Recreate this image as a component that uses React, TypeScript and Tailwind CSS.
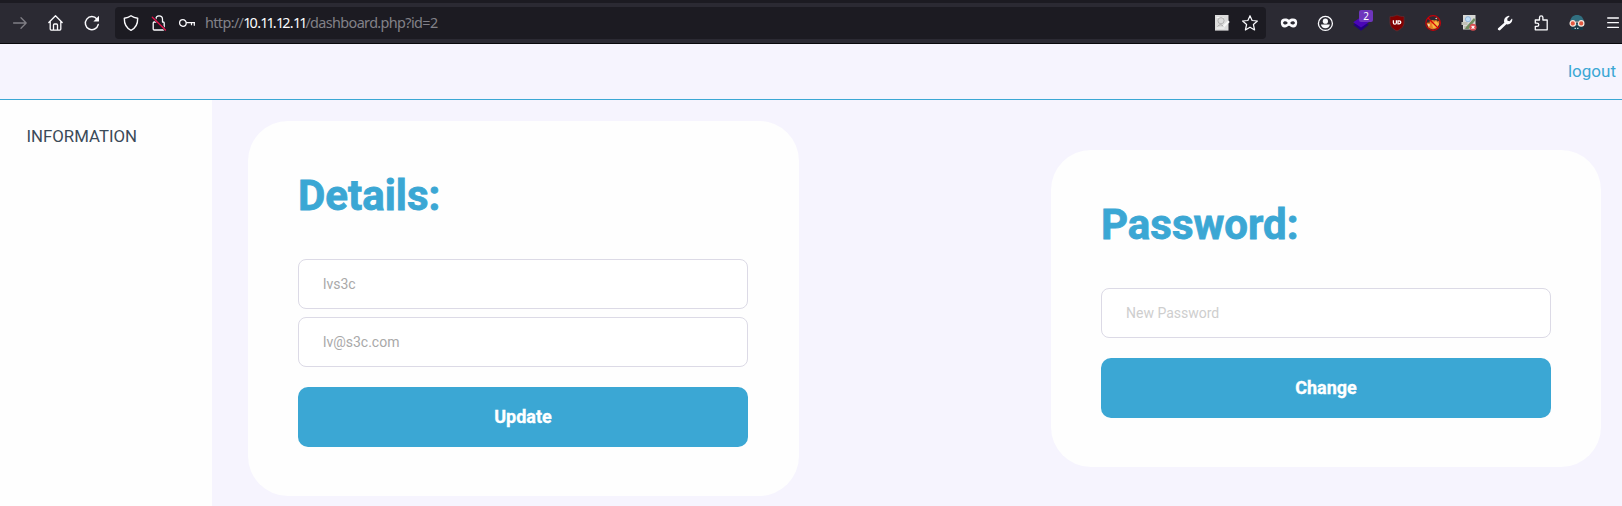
import type { ReactNode } from "react";

function Icon({ children, className = "" }: { children: ReactNode; className?: string }) {
  return (
    <svg viewBox="0 0 16 16" fill="none" className={`size-4 shrink-0 overflow-visible ${className}`}>
      {children}
    </svg>
  );
}

const line = {
  stroke: "#fbfbfe",
  strokeWidth: 1.3,
  strokeLinecap: "round" as const,
  strokeLinejoin: "round" as const,
};

function NavIcons() {
  return (
    <div className="flex gap-5">
      <Icon>
        <path {...line} stroke="#807f86" d="M1.6 8H14.2M9 2.8 14.2 8 9 13.2" />
      </Icon>
      <Icon>
        <path {...line} d="M.8 7.5 7.5.8 14.2 7.5M2.2 6.5v7.6q0 1 1 1h8.6q1 0 1-1V6.5M5.5 15v-5q0-1 1-1h2q1 0 1 1v5" />
      </Icon>
      <Icon>
        <path {...line} strokeWidth={1.5} d="M12.9 4A6.5 6.5 0 1 0 14.2 9.6" />
        <path fill="#fbfbfe" d="M15 .8v5.1a.6.6 0 0 1-.6.6H9.4z" />
      </Icon>
    </div>
  );
}

function Host({ name }: { name: string }) {
  return (
    <span className="text-[#fbfbfe]">
      {name.split("").map((c, i) => (
        <span key={i} className={c === "1" ? "tracking-[-2px]" : "tracking-[-0.7px]"}>
          {c}
        </span>
      ))}
    </span>
  );
}

function AddressBar() {
  return (
    <div className="ml-[15px] flex h-8 w-[1151px] items-center rounded bg-[#1c1b22] px-2">
      <div className="flex gap-3">
        <Icon>
          <path {...line} strokeWidth={1.4} d="M8 .8C5.8 2.4 3.8 3 1.3 3.3 1.2 9 3 13 8 15.3c5-2.3 6.8-6.3 6.7-12C12.2 3 10.2 2.4 8 .8z" />
        </Icon>
        <Icon>
          <path {...line} d="M5 4C5 2 6.300.8 8 .8s3.500 1.200 3.500 3.400V7h.7q1 0 1 1v6q0 1-1 1H3.200q-1 0-1-1V8q0-1 1-1h3" />
          <path stroke="#1c1b22" strokeWidth="2.400" d="M1.500 2.200 14.500 14.800" />
          <path stroke="#e8124c" strokeWidth="1.300" strokeLinecap="round" d="M1.300 2.200 14.500 15" />
        </Icon>
        <Icon>
          <circle {...line} strokeWidth={1.3} cx="3.900" cy="8" r="3.300" />
          <path {...line} strokeWidth={1.2} strokeLinecap="butt" d="M7.200 7.600H16M12.500 7.600v2.600M15.300 7.600v3.200" />
        </Icon>
      </div>
      <span className="ml-[10px] font-['Noto_Sans'] text-[14.4px] leading-5 tracking-[-0.62px] text-[#828188]">
        http://
        <Host name="10.11.12.11" />
        /dashboard.php?id=2
      </span>
      <div className="ml-auto flex gap-3">
        <Icon>
          <rect x="1" y="0" width="13.500" height="15.600" fill="#dcdcdc" />
          <path stroke="#f7f7f7" d="M2.500 2.500h7M2.500 13h8" />
          <circle cx="7" cy="5.700" r="3.100" stroke="#b4b4b4" strokeWidth="1" />
          <path stroke="#aaa" d="M3.500 11.500q3-3.500 6 0" />
          <path stroke="#f7f7f7" strokeWidth="2.200" d="M15 6.200 9.500 11.500" />
        </Icon>
        <Icon>
          <path {...line} strokeWidth={1.2} d="m8 .7 2.100 4.800 5.300.5-4 3.500 1.200 5.500L8 12.200 3.400 15l1.200-5.500L.6 6l5.300-.5z" />
        </Icon>
      </div>
    </div>
  );
}

function Extensions() {
  return (
    <div className="ml-[15px] flex gap-5">
      <Icon>
        <path fill="#fbfbfe" fillRule="evenodd" d="M4 3.500c1.800 0 2.900.5 4 1.200 1.100-.7 2.200-1.200 4-1.200 2.800 0 4.200 1.500 4.200 4 0 3.100-1.400 5-4 5-2 0-3-1.800-4.200-1.800S5.700 12.500 3.800 12.500C1.200 12.500-.2 10.600-.2 7.500c0-2.500 1.400-4 4.200-4zM4.300 6.300C3 6.300 2.300 7 2 7.900 2.600 9 3.400 9.400 4.500 9.400S6.300 8.800 6.700 8C6.300 7 5.600 6.300 4.300 6.300zm7.400 0c-1.300 0-2 .7-2.400 1.700.4.800 1.100 1.400 2.200 1.400S13.400 9 14 7.900C13.700 7 13 6.300 11.700 6.300z" />
      </Icon>
      <Icon>
        <circle {...line} cx="8.400" cy="8.400" r="7" strokeWidth={1.3} />
        <circle cx="8.400" cy="6.200" r="2.600" fill="#fbfbfe" />
        <path fill="#fbfbfe" d="M4 9.500h8.800c-.2 2.300-1.900 3.700-4.400 3.700S4.200 11.800 4 9.500z" />
      </Icon>
      <div className="relative size-4">
        <Icon>
          <path fill="#230080" d="M.2 9.800 8 6l7.800 3.800L8 15.800z" />
          <path fill="#4a06b8" d="M.2 7.200 8 2l7.800 5.200L8 12.400z" />
        </Icon>
        <span className="absolute -top-[5px] left-[6px] flex h-[12px] w-[14px] items-center justify-center rounded-[2px] bg-[#6e35bd] font-['Noto_Sans'] text-[10px] leading-none text-white">
          2
        </span>
      </div>
      <Icon>
        <path fill="#800000" stroke="#5d3036" strokeWidth=".7" d="M8 0C5.500 1.300 3.300 1.600.9 1.600V7c0 4.500 2.700 6.900 7.100 9 4.400-2.100 7.100-4.500 7.100-9V1.600C12.700 1.600 10.500 1.300 8 0z" />
        <path stroke="#fff" strokeWidth="1.300" d="M4.400 5.300v2.400q0 1.500 1.500 1.500t1.500-1.500V5.300" />
        <path stroke="#fff" strokeWidth="1.300" d="M9 5.900h1.200q1.600 0 1.600 1.400t-1.600 1.500H9z" />
      </Icon>
      <Icon>
        <path fill="#e98026" d="M1.500 8 4 7l3-2 3 .5L14 3l.5 5-2 5L8 14.500 3.500 13z" />
        <path fill="#f7bb43" d="m7 9 4-3 3 3-2.500 3.500L8 13z" />
        <path fill="#f4ece0" d="m2.500 9 2.500.5L4 12zM10 3.500l2-1 .5 2z" />
        <path fill="#4d3020" d="m11 4 3-1.500V6l-2 .5zM1.500 7 4 6.500 5 8z" />
        <circle cx="8.100" cy="8" r="7.300" stroke="#c60008" strokeWidth="1.200" />
        <path stroke="#d90008" strokeWidth="1.200" d="m3 3 10.300 10.200" />
      </Icon>
      <Icon>
        <path fill="#d8d9d6" d="M2 0h12.500v14.500H2z" />
        <path fill="#c2c1b8" d="M.5 7h6v3h-6zM3 11h6v3H3z" />
        <path fill="#718d60" d="m5 12 8-9 1.500 2-7 9H4z" />
        <circle cx="7" cy="4.200" r="2.600" fill="#bfdef8" stroke="#8fb0d6" strokeWidth=".9" />
        <circle cx="12" cy="12.300" r="3.500" fill="#d94c50" />
        <path stroke="#fff" strokeWidth="1.200" d="m10.600 10.900 2.800 2.800m0-2.800-2.800 2.800" />
      </Icon>
      <Icon>
        <path fill="#fbfbfe" d="M1.100 13.200 7.300 7.700C6.500 4.700 8 1.500 11.700.8l1 .2-2.500 2.800.3 2 2.100.4 2.400-2.600.4.900c-.2 3.300-2.900 5.500-6.100 4.800l-6.500 6.100Q.8 15.200.8 14.200q0-.6.300-1z" />
      </Icon>
      <Icon>
        <path {...line} strokeWidth={1.3} d="M2.300 5h4.200V2.600C6.500 1.400 7.200.8 8.200.8s1.700.6 1.700 1.800V5h4.300v9.800H2.300v-3.500h1.600c1.200 0 1.900-.7 1.900-1.600s-.7-1.600-1.900-1.600H2.300z" />
      </Icon>
      <Icon>
        <path fill="#316f80" d="M1 7.500C1.300 2.400 4.200 0 8 0s6.700 2.400 7 7.500l-2.500 3h-9z" />
        <path fill="#173946" d="M2 11.800 5 11h6l3 .8V15H2z" />
        <path fill="#111820" d="M1 6h14v2.500H1z" />
        <circle cx="3.800" cy="8.400" r="2.700" fill="#e3573f" stroke="#f6e9df" strokeWidth="1.200" />
        <circle cx="12.200" cy="8.400" r="2.700" fill="#e3573f" stroke="#f6e9df" strokeWidth="1.200" />
        <path stroke="#e9f1ef" strokeWidth="1" d="M6.500 7h3M5.500 13.300H7m1 0h1.500" />
      </Icon>
      <Icon>
        <path {...line} d="M2.700 3h10.700M2.700 7.700h10.700M2.700 12.400h10.700" />
      </Icon>
    </div>
  );
}

function Field({ value, placeholder }: { value?: string; placeholder?: string }) {
  return (
    <input
      defaultValue={value}
      placeholder={placeholder}
      className="block h-[50px] w-full rounded-lg border border-[#dcdae6] bg-white px-6 text-[14px] text-[#a9a9a9] outline-none placeholder:text-[#cecece]"
    />
  );
}

function Card({ title, action, className, children }: { title: string; action: string; className: string; children: ReactNode }) {
  return (
    <section className={`shrink-0 rounded-[40px] bg-[#fefefe] pt-[50px] pb-[49px] pl-[50px] ${className}`}>
      <h1 className="mb-[38px] h-[50px] text-[42px] leading-[50px] font-bold text-[#3ba7d4] [-webkit-text-stroke:0.8px_#3ba7d4]">{title}</h1>
      <div className="flex flex-col gap-2">{children}</div>
      <button className="mt-5 block h-[60px] w-full rounded-[10px] bg-[#3ba7d4] pb-[2px] text-[18px] font-bold text-white [-webkit-text-stroke:0.3px_white]">{action}</button>
    </section>
  );
}

export default function App() {
  return (
    <div className="flex h-[506px] w-[1622px] flex-col overflow-hidden bg-[#f6f4fe] font-[Roboto,sans-serif]">
      <div className="flex h-11 shrink-0 items-center overflow-hidden border-t-[3px] border-b border-t-[#1c1b22] border-b-[#08080b] bg-[#2b2a33] pl-3">
        <NavIcons />
        <AddressBar />
        <Extensions />
      </div>
      <header className="flex h-14 shrink-0 items-center justify-end border-b border-[#3ba7d4] pr-[6px] pb-[2px]">
        <a className="text-[17px] leading-6 text-[#3ba7d4]">logout</a>
      </header>
      <div className="flex min-h-0 flex-1">
        <aside className="w-[212px] shrink-0 bg-[#fefefe] pt-6 pl-[26.5px]">
          <a className="block text-[16.8px] leading-[25px] text-[#3b4a58]">INFORMATION</a>
        </aside>
        <main className="flex flex-1 items-start justify-between pt-[21px] pr-[21px] pl-9">
          <Card title="Details:" action="Update" className="w-[551px] pr-[51px]">
            <Field value="lvs3c" />
            <Field value="lv@s3c.com" />
          </Card>
          <Card title="Password:" action="Change" className="mt-[29px] w-[550px] pr-[50px]">
            <Field placeholder="New Password" />
          </Card>
        </main>
      </div>
    </div>
  );
}
